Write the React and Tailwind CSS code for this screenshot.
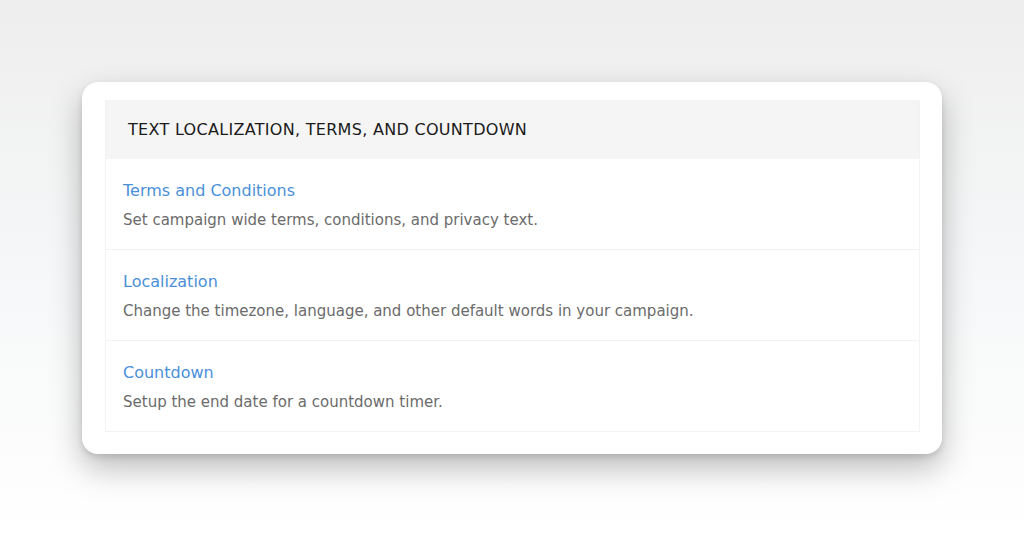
const ITEMS = [
  { title: 'Terms and Conditions', desc: 'Set campaign wide terms, conditions, and privacy text.' },
  { title: 'Localization', desc: 'Change the timezone, language, and other default words in your campaign.' },
  { title: 'Countdown', desc: 'Setup the end date for a countdown timer.' },
];

const App = () => {
  return (
    <div
      className="min-h-screen w-full flex items-center justify-center bg-gradient-to-b from-[#eeeeee] via-[#f6f7f8] to-white"
      style={{ fontFamily: '"DejaVu Sans", Verdana, sans-serif' }}
    >
      <div className="w-[860px] bg-white rounded-[16px] pt-[18px] pb-[22px] pl-[23px] pr-[22px] shadow-[0_14px_32px_rgba(0,0,0,0.26),0_3px_6px_rgba(0,0,0,0.12)]">
        <div className="border border-[#f3f3f3]">
          {/* Header */}
          <div className="h-[58px] bg-[#f5f5f5] flex items-center pl-[22px]">
            <h2 className="text-[16px] text-[#1a1a1a] tracking-[0.3px]">TEXT LOCALIZATION, TERMS, AND COUNTDOWN</h2>
          </div>

          {ITEMS.map((item, i) => (
            <div
              key={i}
              className={`px-[17px] pt-[22px] pb-[19px] ${i < ITEMS.length - 1 ? 'border-b border-[#f2f2f2]' : ''}`}
            >
              <p className="text-[16px] leading-5 text-[#4a90d9]">{item.title}</p>
              <p className="mt-[9px] text-[15px] leading-5 text-[#6b6b6b]">{item.desc}</p>
            </div>
          ))}
        </div>
      </div>
    </div>
  );
};

export default App;
